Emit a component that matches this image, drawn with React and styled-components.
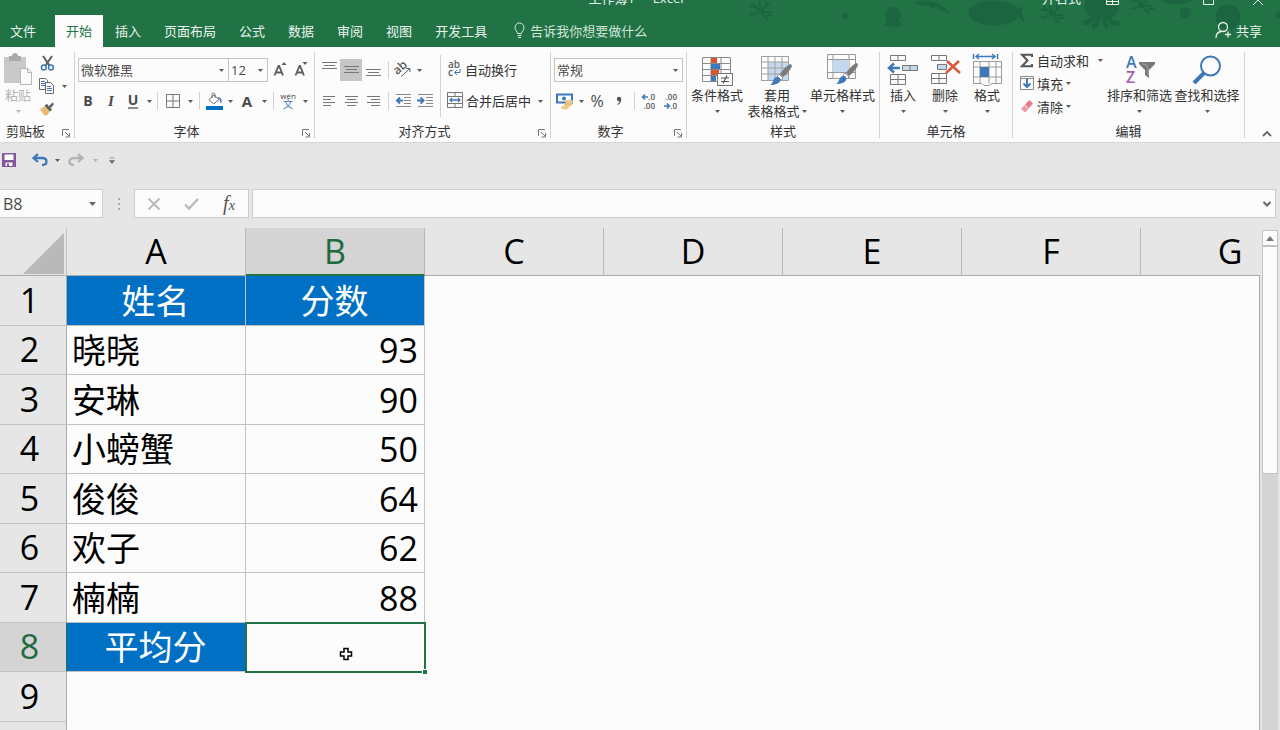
import React from "react";
import styled, { createGlobalStyle, css } from "styled-components";

const Colors = {
  green: "#217346",
  greenDark: "#1b6640",
  greenText: "#1e6b41",
  ribbon: "#fcfcfc",
  chrome: "#e6e6e6",
  line: "#d2d2d2",
  border: "#c3c3c3",
  text: "#333333",
  icon: "#5c5c5c",
  blue: "#3f78b8",
  cellBlue: "#0070c4",
  disabled: "#b4b4b4",
};

const GlobalStyle = createGlobalStyle`
  *, *::before, *::after {
    box-sizing: border-box;
  }

  body {
    margin: 0;
    font-family: "Open Sans", "Noto Sans CJK SC", sans-serif;
    font-size: 13px;
    color: ${Colors.text};
  }

  button, input, select {
    font: inherit;
    color: inherit;
    margin: 0;
  }

  svg {
    display: block;
    flex: none;
    overflow: visible;
  }
`;

const Window = styled.div`
  height: 100vh;
  display: flex;
  flex-direction: column;
  overflow: hidden;
  background: ${Colors.chrome};
`;

/* ---------- title bar and tabs ---------- */

const Header = styled.header`
  position: relative;
  flex: none;
  background: ${Colors.green};
  color: #e9f3ec;
  overflow: hidden;
`;

const Decoration = styled.svg`
  position: absolute;
  top: 0;
  right: 0;
  fill: ${Colors.greenDark};
  stroke: ${Colors.greenDark};
`;

const TitleRow = styled.div`
  position: relative;
  height: 15px;
  display: grid;
  grid-template-columns: 1fr auto 1fr;
  grid-template-rows: 6px;
  align-items: end;
  padding: 0 16px 0 8px;
  line-height: 16px;
`;

const WindowTools = styled.div`
  display: flex;
  justify-content: flex-end;
  align-items: flex-end;
`;

const WindowButton = styled.button`
  border: 0;
  padding: 0;
  background: none;
  margin-left: ${(props) => props.$gap}px;
`;

const TabRow = styled.nav`
  position: relative;
  display: flex;
  height: 32px;
  gap: 1px;
`;

const Tab = styled.button`
  border: 0;
  padding: 0 11px 2px;
  background: transparent;
  color: inherit;

  ${(props) =>
    props.$file &&
    css`
      padding-left: 10px;
      padding-right: 18px;
    `}

  ${(props) =>
    props.$active &&
    css`
      background: ${Colors.ribbon};
      color: ${Colors.green};
    `}
`;

const TellMe = styled.button`
  display: flex;
  align-items: center;
  gap: 5px;
  border: 0;
  margin-left: 15px;
  padding: 0 0 2px;
  background: none;
  color: #cfe3d6;
`;

const Share = styled(TellMe)`
  margin-left: auto;
  margin-right: 18px;
  color: #e9f3ec;
`;

/* ---------- ribbon ---------- */

const RibbonBar = styled.section`
  display: flex;
  flex: none;
  height: 96px;
  margin-left: -7px;
  padding-top: 5px;
  background: ${Colors.ribbon};
  border-bottom: 1px solid #d6d6d6;
`;

const GroupBox = styled.div`
  flex: none;
  width: ${(props) => props.$width}px;
  height: 86px;
  border-right: 1px solid ${Colors.line};
`;

const GroupBody = styled.div`
  display: flex;
  height: 71px;
  padding-left: ${(props) => props.$pad || 0}px;
`;

const GroupFooter = styled.div`
  display: flex;
  align-items: center;
  height: 16px;
  line-height: 16px;
`;

const GroupLabel = styled.span`
  flex: 1;
  text-align: center;
  white-space: nowrap;
`;

const Launcher = styled.button`
  width: 16px;
  border: 0;
  padding: 4px 0 0 4px;
  background: none;
`;

const Column = styled.div`
  display: flex;
  flex-direction: column;
  width: ${(props) => (props.$width ? `${props.$width}px` : "auto")};
  padding-top: ${(props) => props.$top || 0}px;
  padding-left: ${(props) => props.$pad || 0}px;
  gap: ${(props) => props.$gap || 0}px;
`;

const Row = styled.div`
  display: flex;
  align-items: center;
  height: ${(props) => props.$height || 24}px;
`;

const ToolButton = styled.button`
  display: flex;
  align-items: center;
  justify-content: center;
  flex: none;
  width: ${(props) => props.$width || 22}px;
  height: 22px;
  border: 0;
  padding: 0;
  background: ${(props) => (props.$on ? "#c6c6c6" : "none")};
  color: #4a4a4a;
`;

const Letter = styled.span`
  font-size: ${(props) => props.$size || 14}px;
  line-height: 18px;
  font-weight: ${(props) => (props.$plain ? 400 : 700)};
  color: #4a4a4a;
`;

const Italic = styled(Letter)`
  font-family: "Liberation Serif", serif;
  font-style: italic;
`;

const Underlined = styled(Letter)`
  line-height: 14px;
  border-bottom: 2px solid #8a8a8a;
`;

const Divider = styled.span`
  flex: none;
  width: 1px;
  height: 18px;
  background: ${Colors.line};
  margin: 0 ${(props) => props.$after || 3}px 0 ${(props) => props.$before || 4}px;
`;

const TallDivider = styled.span`
  width: 1px;
  height: 62px;
  margin-top: 3px;
  background: ${Colors.line};
`;

const TextButton = styled.button`
  display: flex;
  align-items: center;
  gap: ${(props) => props.$gap || 3}px;
  height: ${(props) => props.$height || 24}px;
  border: 0;
  padding: 0 0 2px;
  background: none;
  white-space: nowrap;
`;

const BigButton = styled.button`
  display: flex;
  flex-direction: column;
  align-items: center;
  flex: none;
  width: ${(props) => props.$width}px;
  height: 70px;
  border: 0;
  padding: 0;
  background: none;
  line-height: 16px;
  white-space: nowrap;
  color: ${(props) => (props.$disabled ? Colors.disabled : "inherit")};
`;

const BigIcon = styled.span`
  display: flex;
  align-items: center;
  justify-content: center;
  height: 35px;
`;

const SecondLine = styled.span`
  display: flex;
  align-items: center;
  gap: 2px;
  height: 16px;
`;

const Field = styled.div`
  position: relative;
  width: ${(props) => props.$width}px;
  height: 24px;
  margin-right: ${(props) => props.$after || 0}px;
  margin-left: ${(props) => (props.$joined ? -1 : 0)}px;

  select {
    width: 100%;
    height: 100%;
    appearance: none;
    border: 1px solid ${Colors.border};
    border-radius: 0;
    padding: 0 0 1px 2px;
    background: ${Colors.ribbon};
    color: #4a4a4a;
  }

  svg {
    position: absolute;
    right: 5px;
    top: 11px;
    pointer-events: none;
  }
`;

const Collapse = styled.button`
  align-self: flex-end;
  margin: 0 8px 5px auto;
  border: 0;
  padding: 0;
  background: none;
`;

/* ---------- quick access and formula bar ---------- */

const QuickAccess = styled.div`
  display: flex;
  align-items: center;
  flex: none;
  height: 34px;
  margin-bottom: 12px;
  padding-left: 1px;
`;

const FormulaBar = styled.div`
  display: flex;
  flex: none;
  height: 29px;
  margin-bottom: 10px;
  padding-right: 4px;
`;

const barBox = css`
  background: ${Colors.ribbon};
  border: 1px solid #cdcdcd;
`;

const NameBox = styled.div`
  ${barBox}
  display: flex;
  align-items: center;
  width: 103px;
  border-left: 0;
  padding-right: 6px;

  input {
    flex: 1;
    min-width: 0;
    border: 0;
    padding: 0 0 0 3px;
    background: none;
    font-size: 16px;
    color: #4a4a4a;
    outline: 0;
  }
`;

const Grip = styled.div`
  display: grid;
  place-items: center;
  width: 31px;
`;

const FormulaTools = styled.div`
  ${barBox}
  display: flex;
  align-items: center;
  justify-content: space-around;
  width: 115px;
  margin-right: 3px;
`;

const Fx = styled.span`
  font-family: "Liberation Serif", serif;
  font-style: italic;
  font-size: 20px;
  line-height: 20px;
  color: #555555;

  small {
    font-size: 15px;
  }
`;

const FormulaField = styled.div`
  ${barBox}
  display: flex;
  align-items: center;
  flex: 1;
  padding-right: 3px;

  input {
    flex: 1;
    border: 0;
    background: none;
    outline: 0;
  }
`;

/* ---------- sheet ---------- */

const SheetArea = styled.main`
  display: flex;
  flex: 1;
  min-height: 0;
`;

const Viewport = styled.div`
  position: relative;
  flex: 1;
  min-width: 0;
  overflow: hidden;

  &::after {
    content: "";
    position: absolute;
    top: 48px;
    right: 0;
    bottom: 0;
    border-right: 1px solid #ababab;
  }
`;

const Grid = styled.table`
  table-layout: fixed;
  width: 1320px;
  border-collapse: separate;
  border-spacing: 0;
  background: ${Colors.ribbon};
  font-size: 34px;
  line-height: 46px;
  color: #000000;

  th,
  td {
    padding: 0;
    white-space: nowrap;
  }

  tbody tr {
    height: 49px;
  }

  tbody tr:nth-child(odd) {
    height: 50px;
  }
`;

const HeadCol = styled.col`
  width: 67px;
`;

const Corner = styled.th`
  height: 48px;
  background: ${Colors.chrome};
  border-right: 1px solid ${Colors.border};
  border-bottom: 1px solid #ababab;

  svg {
    margin: 4px 2px 0 auto;
  }
`;

const ColumnHead = styled.th`
  height: 48px;
  font-weight: 400;
  line-height: 44px;
  background: ${(props) => (props.$active ? "#d4d4d4" : Colors.chrome)};
  color: ${(props) => (props.$active ? Colors.greenText : "inherit")};
  border-right: 1px solid #b9b9b9;
  border-bottom: ${(props) =>
    props.$active ? `2px solid ${Colors.green}` : "1px solid #ababab"};

  && {
    padding-bottom: ${(props) => (props.$active ? 1 : 2)}px;
  }
`;

const RowHead = styled.th`
  && {
    padding: 0 7px 2px 0;
  }
  font-weight: 400;
  background: ${(props) => (props.$active ? "#d4d4d4" : Colors.chrome)};
  color: ${(props) => (props.$active ? Colors.greenText : "inherit")};
  border-right: 1px solid
    ${(props) => (props.$active ? Colors.green : "#ababab")};
  border-bottom: 1px solid ${Colors.border};
`;

const Cell = styled.td`
  position: relative;
  border-right: 1px solid ${Colors.border};
  border-bottom: 1px solid ${Colors.border};
  text-align: ${(props) => props.$align || "left"};

  && {
    padding: 0 6px 0 5px;
  }

  ${(props) =>
    props.$fill &&
    css`
      background: ${Colors.cellBlue};
      color: #ffffff;
      text-align: center;
    `}
`;

const Selection = styled.div`
  position: absolute;
  inset: -1px -2px -2px -1px;
  z-index: 1;
  border: 2px solid ${Colors.green};

  &::after {
    content: "";
    position: absolute;
    right: -3px;
    bottom: -3px;
    width: 5px;
    height: 5px;
    background: ${Colors.green};
    border: solid ${Colors.ribbon};
    border-width: 1px 0 0 1px;
  }
`;

const Pointer = styled.svg`
  position: absolute;
  top: 24px;
  left: 93px;
`;

const Scrollbar = styled.div`
  display: flex;
  flex-direction: column;
  width: 20px;
  padding: 2px 2px 0 2px;
`;

const ScrollButton = styled.button`
  display: grid;
  place-items: center;
  flex: none;
  height: 16px;
  padding: 0;
  background: ${Colors.ribbon};
  border: 1px solid ${Colors.border};
`;

const ScrollTrack = styled.div`
  flex: 1;
  background: #d4d4d4;
`;

const ScrollThumb = styled.div`
  height: 228px;
  background: ${Colors.ribbon};
  border: 1px solid ${Colors.border};
`;

/* ---------- icons ---------- */

const Caret = ({ color = "#5c5c5c" }) => (
  <svg width="5" height="3" viewBox="0 0 5 3">
    <path d="M0 0H5L2.5 3Z" fill={color} />
  </svg>
);

const CaretButton = ({ width = 10, color, label }) => (
  <ToolButton $width={width} aria-label={label}>
    <Caret color={color} />
  </ToolButton>
);

const LauncherIcon = () => (
  <svg width="9" height="9" viewBox="0 0 9 9" fill="none" stroke="#777">
    <path d="M.5 7V.5H7M3 3l4 4M7.500 4v4h-4" />
  </svg>
);

const PasteIcon = () => (
  <svg width="30" height="34" viewBox="0 0 30 34">
    <path d="M1 4H23V30H1Z" fill="#c9c9c9" />
    <path d="M6 3h3c0-4 6-4 6 0h3v5H6Z" fill="#a9a9a9" />
    <path d="M17.500 15.500h7l4 4v12h-11Z" fill="#fcfcfc" stroke="#b5b5b5" />
    <path d="M24.500 15.500v4h4" fill="none" stroke="#b5b5b5" />
  </svg>
);

const CutIcon = () => (
  <svg width="15" height="16" viewBox="0 0 15 16" fill="none">
    <path d="M3 1l6.500 9.500M12 1L5.500 10.500" stroke="#5c5c5c" strokeWidth="2" />
    <circle cx="3.800" cy="12.500" r="2.400" stroke={Colors.blue} strokeWidth="1.500" />
    <circle cx="11" cy="12.500" r="2.400" stroke={Colors.blue} strokeWidth="1.500" />
  </svg>
);

const CopyIcon = () => (
  <svg width="16" height="16" viewBox="0 0 16 16" fill="#fcfcfc" stroke="#6a6a6a">
    <path d="M.5 .5h6l2 2v9h-8Z" />
    <path d="M2 3.500h4M2 5.500h4M2 7.500h4" stroke={Colors.blue} />
    <path d="M6.500 4.500h5l3 3v8h-8Z" />
    <path d="M8 8.500h4M8 10.500h5M8 12.500h5" stroke={Colors.blue} />
  </svg>
);

const BrushIcon = () => (
  <svg width="16" height="14" viewBox="0 0 16 14">
    <path d="M1 7l5-3 5 5-3 4.500-3-.5Z" fill="#e9b872" />
    <path d="M5.500 3.500L8 2l5 5.500-2 2Z" fill="#5c5c5c" />
    <path d="M10 4l3.500-3.500L15 2l-3 4Z" fill="#5c5c5c" />
  </svg>
);

const GrowFont = ({ down }) => (
  <svg width="15" height="16" viewBox="0 0 15 16">
    <path
      d="M1.500 13.500L5.500 4h.6L10 13.500M3 10.500h5.500"
      fill="none"
      stroke="#5c5c5c"
      strokeWidth="1.800"
    />
    <path d={down ? "M8.500 0h5L11 3Z" : "M8.500 3h5L11 0Z"} fill="#5c5c5c" />
  </svg>
);

const BorderIcon = () => (
  <svg width="16" height="16" viewBox="0 0 16 16" fill="none" stroke="#777">
    <path d="M1.500 1.500h13v13h-13ZM8 1.500v13M1.500 8h13" />
  </svg>
);

const FillIcon = () => (
  <svg width="18" height="18" viewBox="0 0 18 18">
    <path d="M4 7.500L9 3l5 4.500-5.500 4.500Z" fill="#fcfcfc" stroke="#6a6a6a" />
    <path d="M7 6V2.500c0-2 3-2 3 0V6" fill="none" stroke="#6a6a6a" />
    <path d="M12 5c4 0 5 2.500 4.500 6-1.500 0-2-2-2-4Z" fill={Colors.blue} />
    <rect x="1" y="14" width="17" height="4" fill={Colors.cellBlue} />
  </svg>
);

const PhoneticIcon = () => (
  <svg width="16" height="18" viewBox="0 0 16 18">
    <text x="8" y="7" textAnchor="middle" fontSize="8" fill="#444">
      wén
    </text>
    <text x="8" y="16" textAnchor="middle" fontSize="10" fill={Colors.blue}>
      文
    </text>
  </svg>
);

const linePaths = {
  top: "M1 1.500h15M3 4.500h11M1 7.500h15",
  middle: "M1 5.500h15M3 8.500h11M1 11.500h15",
  bottom: "M1 8.500h15M3 11.500h11M1 14.500h15",
  left: "M2 4.500h12M2 7.500h8M2 10.500h12M2 13.500h8",
  center: "M2 4.500h13M4 7.500h9M2 10.500h13M4 13.500h9",
  right: "M2 4.500h13M6 7.500h9M2 10.500h13M6 13.500h9",
};

const LinesIcon = ({ kind }) => (
  <svg width="17" height="18" viewBox="0 0 17 18">
    <path d={linePaths[kind]} stroke="#777" />
  </svg>
);

const OrientIcon = () => (
  <svg width="17" height="16" viewBox="0 0 17 16">
    <text
      x="1"
      y="10"
      fontSize="12"
      fontWeight="600"
      fill="#5c5c5c"
      transform="rotate(-42 6 10)"
    >
      ab
    </text>
    <path d="M6 14.500L15 6.500M11.500 6.500H15V10" fill="none" stroke="#5c5c5c" />
  </svg>
);

const IndentIcon = ({ out }) => (
  <svg width="17" height="16" viewBox="0 0 17 16">
    <path d="M1 1.500h15M9 4.500h7M9 7.500h7M9 10.500h7M1 13.500h15" stroke="#888" />
    <path
      d={out ? "M8 7.500H2M5 4.500l-3 3 3 3" : "M0 7.500h6M3.500 4.500l3 3-3 3"}
      fill="none"
      stroke={Colors.blue}
      strokeWidth="2"
    />
  </svg>
);

const WrapIcon = () => (
  <svg width="15" height="18" viewBox="0 0 15 18">
    <text x="1" y="8" fontSize="10" fontWeight="600" fill="#5c5c5c">
      ab
    </text>
    <text x="1" y="16" fontSize="10" fontWeight="600" fill="#5c5c5c">
      c
    </text>
    <path d="M13 9v3.500H8M10 10l-2.500 2.500L10 15" fill="none" stroke={Colors.blue} />
  </svg>
);

const MergeIcon = () => (
  <svg width="16" height="16" viewBox="0 0 16 16" fill="none" stroke="#777">
    <path d="M.5 .5h15v15H.5ZM.5 4.500h15M.5 11.500h15M8 .5v4M8 11.500v4" />
    <path
      d="M3 8h10M5 6L3 8l2 2M11 6l2 2-2 2"
      stroke={Colors.blue}
      strokeWidth="1.300"
    />
  </svg>
);

const CurrencyIcon = () => (
  <svg width="18" height="17" viewBox="0 0 18 17">
    <rect x="1" y="1.500" width="15" height="8" fill="#fcfcfc" stroke={Colors.blue} strokeWidth="2" />
    <circle cx="8" cy="5.500" r="2" fill={Colors.blue} />
    <ellipse cx="13" cy="8.500" rx="4" ry="1.800" fill="#f0c98d" />
    <ellipse cx="12" cy="11.500" rx="4" ry="1.800" fill="#edbf79" />
    <ellipse cx="9" cy="14.500" rx="4" ry="1.800" fill="#f0c98d" />
  </svg>
);

const CommaIcon = () => (
  <svg width="6" height="10" viewBox="0 0 6 10" fill="#555">
    <circle cx="3" cy="3" r="2.200" />
    <path d="M5.200 3c.3 3-1.500 5-3.700 6l-.4-.8c1.500-1 2.300-2 2.200-3.500Z" />
  </svg>
);

const DecimalIcon = ({ less }) => (
  <svg width="16" height="17" viewBox="0 0 16 17">
    <text x="14" y="7" textAnchor="end" fontSize="8" fontWeight="600" fill="#555">
      {less ? ".00" : ".0"}
    </text>
    <text x="14" y="16" textAnchor="end" fontSize="8" fontWeight="600" fill="#555">
      {less ? ".0" : ".00"}
    </text>
    <path
      d={less ? "M1 13h5M4 10.500L6.500 13 4 15.500" : "M7 4H2M4 1.500L1.500 4 4 6.500"}
      fill="none"
      stroke={Colors.blue}
      strokeWidth="1.500"
    />
  </svg>
);

const ConditionalIcon = () => (
  <svg width="32" height="32" viewBox="0 0 32 32">
    <path
      d="M1.500 3.500h28v24h-28ZM1.500 9.500h28M1.500 15.500h28M1.500 21.500h28M10 3.500v24M20 3.500v24"
      fill="#fcfcfc"
      stroke="#8a8a8a"
    />
    <path d="M10 4h6v5h-6ZM10 16h8v5h-8Z" fill="#d9542f" />
    <path d="M10 10h9v5h-9ZM10 22h5v5h-5Z" fill={Colors.blue} />
    <rect x="16.500" y="19.500" width="15" height="12" fill="#fcfcfc" stroke="#777" />
    <path d="M20 24h8M20 27.500h8M26 21.500l-4 8" stroke="#555" strokeWidth="1.200" />
  </svg>
);

const StyleBrush = () => (
  <>
    <path d="M31 10c-4 1-9 7-11 10l3 3c4-3 8-8 9-11Z" fill="#7b7b7b" />
    <path d="M19 20l4 4-2 2-4-4Z" fill="#fcfcfc" stroke="#777" strokeWidth=".7" />
    <path d="M10 31c4-1 2-8 8-8 4 1 4 8-8 8Z" fill={Colors.blue} />
  </>
);

const TableStyleIcon = () => (
  <svg width="34" height="32" viewBox="0 0 34 32">
    <path d="M8 8h20v18H8Z" fill="#c5d9ee" />
    <path
      d="M1.500 2.500h27v24h-27ZM1.500 8h27M1.500 14h27M1.500 20h27M8 2.500v24M15 2.500v24M22 2.500v24"
      fill="none"
      stroke="#a0a0a0"
    />
    <StyleBrush />
  </svg>
);

const CellStyleIcon = () => (
  <svg width="34" height="34" viewBox="0 0 34 34">
    <path
      d="M1.500 1.500h28v24h-28ZM1.500 6.500h28M1.500 19.500h28M7 1.500v24M23 1.500v24"
      fill="none"
      stroke="#999"
    />
    <path d="M7 7h16v12H7Z" fill="#c5d9ee" />
    <StyleBrush />
  </svg>
);

const InsertIcon = () => (
  <svg width="32" height="32" viewBox="0 0 32 32" fill="#fcfcfc" stroke="#777">
    <path d="M3.500 1.500h15v5h-15ZM11 1.500v5M3.500 20.500h15v10h-15ZM3.500 25.500h15M11 20.500v10" />
    <path d="M15.500 11.500h15v5h-15ZM23 11.500v5" fill="#c5d9ee" />
    <path d="M13 14H3M7 9.500L2 14l5 4.500" fill="none" stroke={Colors.blue} strokeWidth="2.500" />
  </svg>
);

const DeleteIcon = () => (
  <svg width="32" height="32" viewBox="0 0 32 32" fill="#fcfcfc" stroke="#777">
    <path d="M2.500 1.500h15v5h-15ZM10 1.500v5M2.500 19.500h15v10h-15ZM2.500 24.500h15M10 19.500v10" />
    <path d="M8.500 10.500h9v5h-9Z" fill="#c5d9ee" />
    <path d="M18 7l13 12M30 7L17 19" fill="none" stroke="#d9583c" strokeWidth="2.500" />
  </svg>
);

const FormatIcon = () => (
  <svg width="31" height="34" viewBox="0 0 31 34">
    <path d="M1.500 1v5M25.500 1v5M4 3.500h19M7 1L4 3.500 7 6M20 1l3 2.500L20 6" fill="none" stroke={Colors.blue} strokeWidth="1.500" />
    <path
      d="M1.500 8.500h28v22H20l-3 2h-5l-2-2H1.500ZM1.500 14h28M1.500 24h28M8 8.500v22M17 8.500v22M24 8.500v22"
      fill="none"
      stroke="#9a9a9a"
    />
    <rect x="8" y="14" width="9" height="10" fill={Colors.blue} />
  </svg>
);

const SumIcon = () => (
  <svg width="14" height="15" viewBox="0 0 14 15">
    <path d="M12 4V1.800H2L7.500 7.500 2 13.200H12V11" fill="none" stroke="#555" strokeWidth="2" />
  </svg>
);

const FillDownIcon = () => (
  <svg width="14" height="14" viewBox="0 0 14 14" fill="none">
    <path d="M.5 .5h13v13H.5ZM.5 2.500h13" stroke="#888" />
    <path d="M7 3v8M3.500 7.500L7 11l3.500-3.500" stroke={Colors.blue} strokeWidth="2" />
  </svg>
);

const EraserIcon = () => (
  <svg width="14" height="14" viewBox="0 0 14 14">
    <path d="M5 5.500L9.500 1 13 4.500 8.500 9.500Z" fill="#e37d8d" />
    <path d="M4.500 6L8.500 10 5 13.500 1 10Z" fill="#eb9aa6" />
  </svg>
);

const SortIcon = () => (
  <svg width="30" height="30" viewBox="0 0 30 30">
    <text x="1" y="13" fontSize="16" fontWeight="600" fill={Colors.blue}>
      A
    </text>
    <text x="1" y="28" fontSize="16" fontWeight="600" fill="#a05fb0">
      Z
    </text>
    <path d="M14 7h16v2l-6 6v8l-4-3v-5l-6-6Z" fill="#777" />
    <path d="M17 9h3l3 4v7" fill="none" stroke="#aaa" />
  </svg>
);

const FindIcon = () => (
  <svg width="30" height="30" viewBox="0 0 30 30" fill="none" stroke={Colors.blue}>
    <circle cx="18.500" cy="11" r="9.500" strokeWidth="2" />
    <path d="M12 18L2 28" strokeWidth="4" />
  </svg>
);

const SaveIcon = () => (
  <svg width="14" height="14" viewBox="0 0 14 14">
    <path d="M0 0h14v14H0Z" fill="#8257a0" />
    <path d="M2.500 1.500h9v5.500h-9ZM3.500 9.500h7V13h-7Z" fill="#fcfcfc" />
    <path d="M5 10.500h2V13H5Z" fill="#8257a0" />
  </svg>
);

const UndoIcon = ({ flip }) => (
  <svg width="16" height="14" viewBox="0 0 16 14">
    <path
      d={
        flip
          ? "M14 5H6c-6 0-6 7 0 7M10 1l4.500 4L10 9"
          : "M2 5h8c6 0 6 7 0 7M6 1L1.500 5 6 9"
      }
      fill="none"
      stroke={flip ? "#b2b2b2" : Colors.blue}
      strokeWidth="2.300"
    />
  </svg>
);

const BulbIcon = () => (
  <svg width="11" height="16" viewBox="0 0 11 16" fill="none" stroke="#dcebe1">
    <path d="M3.500 11.500c0-2-2.500-3-2.500-6a4.500 4.500 0 0 1 9 0c0 3-2.500 4-2.500 6ZM3.500 13.500h4M4 15.500h3" />
  </svg>
);

const ShareIcon = () => (
  <svg width="16" height="18" viewBox="0 0 16 18" fill="none" stroke="#e9f3ec" strokeWidth="1.300">
    <circle cx="8" cy="6" r="4.500" />
    <path d="M1 17c0-4 2-6 5-6.500M13 10.500v6M10 13.500h6" />
  </svg>
);

const coral = "M0 0L-9 -9M0 0L-2 -11M0 0L8 -9M0 0L11 0M0 0L7 8M0 0L-11 3M-5 -5h-6M5 -5v-6M6 3h6";

const SeaLife = () => (
  <Decoration width="540" height="47" viewBox="740 0 540 47" aria-hidden="true">
    <path d={coral} transform="translate(761 12)" strokeWidth="2" />
    <circle cx="845" cy="16" r="2.500" />
    <circle cx="893" cy="15" r="7.500" />
    <path d="M888 20l-3 6 4-1 2 2 3-2 3 2 1-2 4 0-4-6Z" />
    <path d="M915 3c10-4 24-2 34 10l-7-4-2 1-4-4-5 2-3-3-5 1Z" />
    <ellipse cx="994" cy="13" rx="25" ry="12" />
    <path d="M1015 13l8-7-2 7 4 10Z" />
    <path d={coral} transform="translate(1052 15)" strokeWidth="2" />
    <ellipse cx="1102" cy="6" rx="17" ry="13" />
    <path
      d="M1094 13c-1 8-5 10-11 10M1098 15c0 8-2 12-6 11M1104 15c0 7 1 11 4 12M1108 14c2 8 5 11 12 9"
      fill="none"
      strokeWidth="5"
    />
    <path d={coral} transform="translate(1142 6)" strokeWidth="2" />
    <path d="M1160 0h32c-9 5-24 5-32 0Z" />
    <circle cx="1185" cy="13" r="5" />
    <circle cx="1228" cy="17" r="12" />
    <circle cx="1279" cy="15" r="3" />
  </Decoration>
);

/* ---------- pieces ---------- */

const Group = ({ label, width, pad, launcher, children }) => (
  <GroupBox $width={width}>
    <GroupBody $pad={pad}>{children}</GroupBody>
    <GroupFooter>
      <GroupLabel>{label}</GroupLabel>
      {launcher && (
        <Launcher aria-label={label}>
          <LauncherIcon />
        </Launcher>
      )}
    </GroupFooter>
  </GroupBox>
);

const Select = ({ label, value, ...rest }) => (
  <Field {...rest}>
    <select aria-label={label} defaultValue={value}>
      <option>{value}</option>
    </select>
    <Caret />
  </Field>
);

const Big = ({ icon, text, second, width, disabled }) => (
  <BigButton $width={width} $disabled={disabled}>
    <BigIcon>{icon}</BigIcon>
    <span>{text}</span>
    <SecondLine>
      {second}
      <Caret color={disabled ? Colors.disabled : undefined} />
    </SecondLine>
  </BigButton>
);

const Ribbon = () => (
  <RibbonBar>
    <Group label="剪贴板" width={82} pad={7} launcher>
      <Big icon={<PasteIcon />} text="粘贴" width={36} disabled />
      <Column $gap={1}>
        <Row $height={22}>
          <ToolButton aria-label="剪切">
            <CutIcon />
          </ToolButton>
        </Row>
        <Row $height={22}>
          <ToolButton aria-label="复制">
            <CopyIcon />
          </ToolButton>
          <CaretButton width={12} label="复制选项" />
        </Row>
        <Row $height={22}>
          <ToolButton aria-label="格式刷">
            <BrushIcon />
          </ToolButton>
        </Row>
      </Column>
    </Group>

    <Group label="字体" width={240} pad={3} launcher>
      <Column $top={6} $gap={7}>
        <Row>
          <Select label="字体" value="微软雅黑" $width={151} />
          <Select label="字号" value="12" $width={40} $joined $after={2} />
          <ToolButton $width={20} aria-label="增大字号">
            <GrowFont />
          </ToolButton>
          <ToolButton aria-label="减小字号">
            <GrowFont down />
          </ToolButton>
        </Row>
        <Row>
          <ToolButton $width={20}>
            <Letter>B</Letter>
          </ToolButton>
          <ToolButton $width={26}>
            <Italic $size={15}>I</Italic>
          </ToolButton>
          <ToolButton $width={18}>
            <Underlined>U</Underlined>
          </ToolButton>
          <CaretButton width={14} label="下划线选项" />
          <Divider $before={1} />
          <ToolButton $width={24} aria-label="边框">
            <BorderIcon />
          </ToolButton>
          <CaretButton label="边框选项" />
          <Divider />
          <ToolButton aria-label="填充颜色">
            <FillIcon />
          </ToolButton>
          <CaretButton label="填充颜色选项" />
          <ToolButton $width={24}>
            <Letter $size={15}>A</Letter>
          </ToolButton>
          <CaretButton label="字体颜色选项" />
          <Divider />
          <ToolButton aria-label="拼音">
            <PhoneticIcon />
          </ToolButton>
          <CaretButton width={12} label="拼音选项" />
        </Row>
      </Column>
    </Group>

    <Group label="对齐方式" width={236} pad={3} launcher>
      <Column $width={122} $top={6} $gap={7}>
        <Row>
          <ToolButton aria-label="顶端对齐">
            <LinesIcon kind="top" />
          </ToolButton>
          <ToolButton $on aria-label="垂直居中">
            <LinesIcon kind="middle" />
          </ToolButton>
          <ToolButton aria-label="底端对齐">
            <LinesIcon kind="bottom" />
          </ToolButton>
          <Divider />
          <ToolButton aria-label="方向">
            <OrientIcon />
          </ToolButton>
          <CaretButton label="方向选项" />
        </Row>
        <Row>
          <ToolButton aria-label="左对齐">
            <LinesIcon kind="left" />
          </ToolButton>
          <ToolButton aria-label="居中">
            <LinesIcon kind="center" />
          </ToolButton>
          <ToolButton aria-label="右对齐">
            <LinesIcon kind="right" />
          </ToolButton>
          <Divider />
          <ToolButton aria-label="减少缩进量">
            <IndentIcon out />
          </ToolButton>
          <ToolButton aria-label="增加缩进量">
            <IndentIcon />
          </ToolButton>
        </Row>
      </Column>
      <TallDivider />
      <Column $top={6} $gap={7} $pad={6}>
        <TextButton>
          <WrapIcon />
          自动换行
        </TextButton>
        <Row>
          <TextButton>
            <MergeIcon />
            合并后居中
          </TextButton>
          <CaretButton width={18} label="合并选项" />
        </Row>
      </Column>
    </Group>

    <Group label="数字" width={136} pad={3} launcher>
      <Column $top={6} $gap={7}>
        <Select label="数字格式" value="常规" $width={129} />
        <Row>
          <ToolButton aria-label="会计数字格式">
            <CurrencyIcon />
          </ToolButton>
          <CaretButton label="会计选项" />
          <ToolButton>
            <Letter $size={16} $plain>
              %
            </Letter>
          </ToolButton>
          <ToolButton aria-label="千位分隔样式">
            <CommaIcon />
          </ToolButton>
          <Divider />
          <ToolButton aria-label="增加小数位数">
            <DecimalIcon />
          </ToolButton>
          <ToolButton aria-label="减少小数位数">
            <DecimalIcon less />
          </ToolButton>
        </Row>
      </Column>
    </Group>

    <Group label="样式" width={193}>
      <Big icon={<ConditionalIcon />} text="条件格式" width={60} />
      <Big icon={<TableStyleIcon />} text="套用" second="表格格式" width={60} />
      <Big icon={<CellStyleIcon />} text="单元格样式" width={71} />
    </Group>

    <Group label="单元格" width={133} pad={2}>
      <Big icon={<InsertIcon />} text="插入" width={42} />
      <Big icon={<DeleteIcon />} text="删除" width={42} />
      <Big icon={<FormatIcon />} text="格式" width={42} />
    </Group>

    <Group label="编辑" width={232} pad={7}>
      <Column $width={86}>
        <TextButton $height={18}>
          <SumIcon />
          自动求和
          <CaretButton width={16} label="求和选项" />
        </TextButton>
        <TextButton $height={28}>
          <FillDownIcon />
          填充
          <Caret />
        </TextButton>
        <TextButton $height={18}>
          <EraserIcon />
          清除
          <Caret />
        </TextButton>
      </Column>
      <Big icon={<SortIcon />} text="排序和筛选" width={67} />
      <Big icon={<FindIcon />} text="查找和选择" width={68} />
    </Group>

    <Collapse aria-label="折叠功能区">
      <svg width="10" height="7" viewBox="0 0 10 7" fill="none">
        <path d="M1 6l4-4 4 4" stroke="#666" strokeWidth="1.800" />
      </svg>
    </Collapse>
  </RibbonBar>
);

const tabs = [
  "开始",
  "插入",
  "页面布局",
  "公式",
  "数据",
  "审阅",
  "视图",
  "开发工具",
];

const columns = ["A", "B", "C", "D", "E", "F", "G"];

const rows = [
  ["姓名", "分数"],
  ["晓晓", 93],
  ["安琳", 90],
  ["小螃蟹", 50],
  ["俊俊", 64],
  ["欢子", 62],
  ["楠楠", 88],
  ["平均分", ""],
  null,
  null,
];

const SheetRow = ({ row, number }) => (
  <tr>
    <RowHead scope="row" $active={number === 8}>
      {number}
    </RowHead>
    {row ? (
      <>
        <Cell $fill={number === 1 || number === 8}>{row[0]}</Cell>
        <Cell $fill={number === 1} $align="right">
          {row[1]}
          {number === 8 && (
            <>
              <Selection />
              <Pointer width="14" height="14" viewBox="0 0 14 14">
                <path
                  d="M5 1.500h4V5h3.500v4H9v3.500H5V9H1.500V5H5Z"
                  fill="#fff"
                  stroke="#000"
                  strokeWidth="1.500"
                />
              </Pointer>
            </>
          )}
        </Cell>
        <td colSpan={5} />
      </>
    ) : (
      <td colSpan={7} />
    )}
  </tr>
);

const App = () => {
  return (
    <Window>
      <GlobalStyle />
      <Header>
        <SeaLife />
        <TitleRow>
          <span />
          <span>工作簿1 &nbsp;-&nbsp; Excel</span>
          <WindowTools>
            <span>开名式</span>
            <WindowButton $gap={25} aria-label="功能区显示选项">
              <svg width="13" height="12" viewBox="0 0 13 12" fill="none" stroke="#e9f3ec">
                <path d="M.5 .5h12v10H.5ZM.5 7.500h12M6.500 5v5" />
              </svg>
            </WindowButton>
            <WindowButton $gap={84} aria-label="还原">
              <svg width="11" height="12" viewBox="0 0 11 12" fill="none" stroke="#e9f3ec">
                <path d="M.5 2.500h10v8H.5Z" />
              </svg>
            </WindowButton>
            <WindowButton $gap={38} aria-label="关闭">
              <svg width="12" height="12" viewBox="0 0 12 12" stroke="#e9f3ec">
                <path d="M1 1l10 10M11 1L1 11" />
              </svg>
            </WindowButton>
          </WindowTools>
        </TitleRow>
        <TabRow>
          <Tab $file>文件</Tab>
          {tabs.map((tab, index) => (
            <Tab key={tab} $active={index === 0}>
              {tab}
            </Tab>
          ))}
          <TellMe>
            <BulbIcon />
            告诉我你想要做什么
          </TellMe>
          <Share>
            <ShareIcon />
            共享
          </Share>
        </TabRow>
      </Header>

      <Ribbon />

      <QuickAccess>
        <ToolButton $width={15} aria-label="保存">
          <SaveIcon />
        </ToolButton>
        <Column $width={12} />
        <ToolButton $width={24} aria-label="撤消">
          <UndoIcon />
        </ToolButton>
        <CaretButton label="撤消选项" />
        <ToolButton $width={28} aria-label="恢复">
          <UndoIcon flip />
        </ToolButton>
        <CaretButton color={Colors.disabled} label="恢复选项" />
        <ToolButton $width={24} aria-label="自定义快速访问工具栏">
          <svg width="6" height="7" viewBox="0 0 6 7">
            <path d="M.5 1h5M.5 3.500h5L3 6.500Z" fill="#666" stroke="#666" strokeWidth=".6" />
          </svg>
        </ToolButton>
      </QuickAccess>

      <FormulaBar>
        <NameBox>
          <input aria-label="名称框" defaultValue="B8" />
          <svg width="7" height="4" viewBox="0 0 7 4">
            <path d="M0 0h7L3.500 4Z" fill="#666" />
          </svg>
        </NameBox>
        <Grip>
          <svg width="2" height="12" viewBox="0 0 2 12" fill="#ababab">
            <path d="M0 0h2v2H0ZM0 5h2v2H0ZM0 10h2v2H0Z" />
          </svg>
        </Grip>
        <FormulaTools>
          <ToolButton aria-label="取消">
            <svg width="14" height="12" viewBox="0 0 14 12" stroke="#b8b8b8" strokeWidth="1.800">
              <path d="M1.500 .5l11 11M12.500 .5l-11 11" />
            </svg>
          </ToolButton>
          <ToolButton aria-label="输入">
            <svg width="15" height="12" viewBox="0 0 15 12" fill="none" stroke="#b8b8b8" strokeWidth="2.300">
              <path d="M1 6.500L5 10.500 14 1" />
            </svg>
          </ToolButton>
          <ToolButton aria-label="插入函数">
            <Fx>
              f<small>x</small>
            </Fx>
          </ToolButton>
        </FormulaTools>
        <FormulaField>
          <input aria-label="编辑栏" />
          <svg width="10" height="6" viewBox="0 0 10 6" fill="none">
            <path d="M1.500 1L5 4.500 8.500 1" stroke="#666" strokeWidth="2" />
          </svg>
        </FormulaField>
      </FormulaBar>

      <SheetArea>
        <Viewport>
          <Grid>
            <colgroup>
              <HeadCol />
              {columns.map((name) => (
                <col key={name} />
              ))}
            </colgroup>
            <thead>
              <tr>
                <Corner>
                  <svg width="41" height="41" viewBox="0 0 41 41">
                    <path d="M41 0V41H0Z" fill="#b9b9b9" />
                  </svg>
                </Corner>
                {columns.map((name) => (
                  <ColumnHead key={name} scope="col" $active={name === "B"}>
                    {name}
                  </ColumnHead>
                ))}
              </tr>
            </thead>
            <tbody>
              {rows.map((row, index) => (
                <SheetRow key={index} row={row} number={index + 1} />
              ))}
            </tbody>
          </Grid>
        </Viewport>
        <Scrollbar>
          <ScrollButton aria-label="向上滚动">
            <svg width="8" height="5" viewBox="0 0 8 5">
              <path d="M0 5L4 0l4 5Z" fill="#777" />
            </svg>
          </ScrollButton>
          <ScrollTrack>
            <ScrollThumb />
          </ScrollTrack>
        </Scrollbar>
      </SheetArea>
    </Window>
  );
};

export default App;
